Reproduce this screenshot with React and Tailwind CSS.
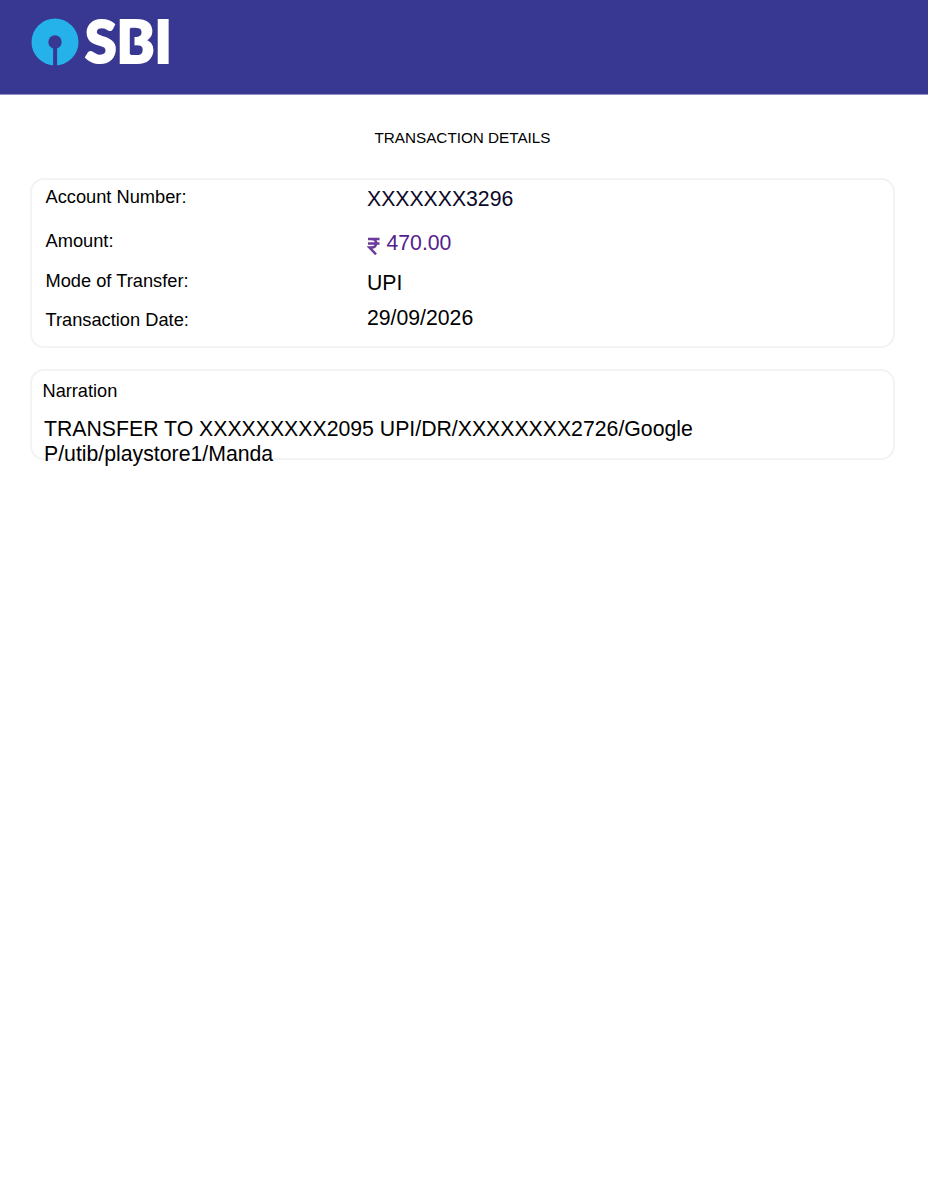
const details = [
  {
    label: "Account Number:",
    value: "XXXXXXX3296",
    rowClass: "h-11",
    valueClass: "pt-0.5 text-[#0b0828]",
  },
  {
    label: "Amount:",
    value: "470.00",
    rupee: true,
    rowClass: "h-10",
    valueClass: "pt-0.5 text-[#54208c]",
  },
  {
    label: "Mode of Transfer:",
    value: "UPI",
    rowClass: "h-[39px]",
    valueClass: "pt-0.5 text-black",
  },
  {
    label: "Transaction Date:",
    value: "29/09/2026",
    rowClass: "h-6",
    valueClass: "-mt-0.5 text-black",
  },
];

function Logo() {
  return (
    <svg width="160" height="72" viewBox="0 0 160 72" role="img">
      <circle cx="25" cy="36" r="23.5" fill="#25b2ea" />
      <circle cx="25" cy="36" r="6.7" fill="#383792" />
      <path d="M23.1 38h4v22h-4z" fill="#383792" />
      <text
        x="55"
        y="57"
        fill="#fff"
        stroke="#fff"
        strokeWidth="2.2"
        textLength="87"
        lengthAdjust="spacingAndGlyphs"
        className="font-['Lato',sans-serif] text-[59px] font-black"
      >
        SBI
      </text>
      {/* gap that joins the two counters of the B */}
      <path d="M99.8 22.5h4.7v25.5h-4.7z" fill="#383792" />
    </svg>
  );
}

function RupeeIcon() {
  return (
    <svg
      width="13"
      height="18"
      viewBox="0 0 13 18"
      fill="none"
      stroke="#6a3a9c"
      strokeWidth="2.5"
      className="mt-1.5 mr-[6.5px] shrink-0"
    >
      <path d="M1 2.1H12.5M1 6.4H12.5M1 2.1H4.5C10.8 2.1 10.8 10.6 4.5 10.6H2.5L9 17.3" />
    </svg>
  );
}

export default function App() {
  return (
    <div className="min-h-[1200px] bg-white font-['Liberation_Sans',Arial,sans-serif] text-black">
      <header className="flex h-[95px] items-start border-b border-[#9491c4] bg-[#383792] pt-1.5 pl-[30px]">
        <Logo />
      </header>

      <main className="flex flex-col pr-[33px] pl-[30px]">
        <h1 className="mt-[31px] text-center text-[15.25px] leading-6">
          TRANSACTION DETAILS
        </h1>

        <section className="mt-7 h-[170px] rounded-[14px] border-2 border-[#f3f3f6] pt-[5px] pl-[13.5px]">
          {details.map((item) => (
            <div
              key={item.label}
              className={`grid grid-cols-[321.5px_1fr] items-start ${item.rowClass}`}
            >
              <span className="text-[18.25px] leading-6">{item.label}</span>
              <span
                className={`flex items-start text-[21.22px] leading-6 ${item.valueClass}`}
              >
                {item.rupee && <RupeeIcon />}
                {item.value}
              </span>
            </div>
          ))}
        </section>

        <section className="mt-[21px] h-[91px] rounded-[14px] border-2 border-[#f3f3f6] pt-2 pl-[10.5px]">
          <h2 className="text-[18.2px] leading-6">Narration</h2>
          <p className="mt-3.5 ml-[1.5px] w-[690px] text-[21.25px] leading-[25px]">
            TRANSFER TO XXXXXXXXX2095 UPI/DR/XXXXXXXX2726/Google
            P/utib/playstore1/Manda
          </p>
        </section>
      </main>
    </div>
  );
}
